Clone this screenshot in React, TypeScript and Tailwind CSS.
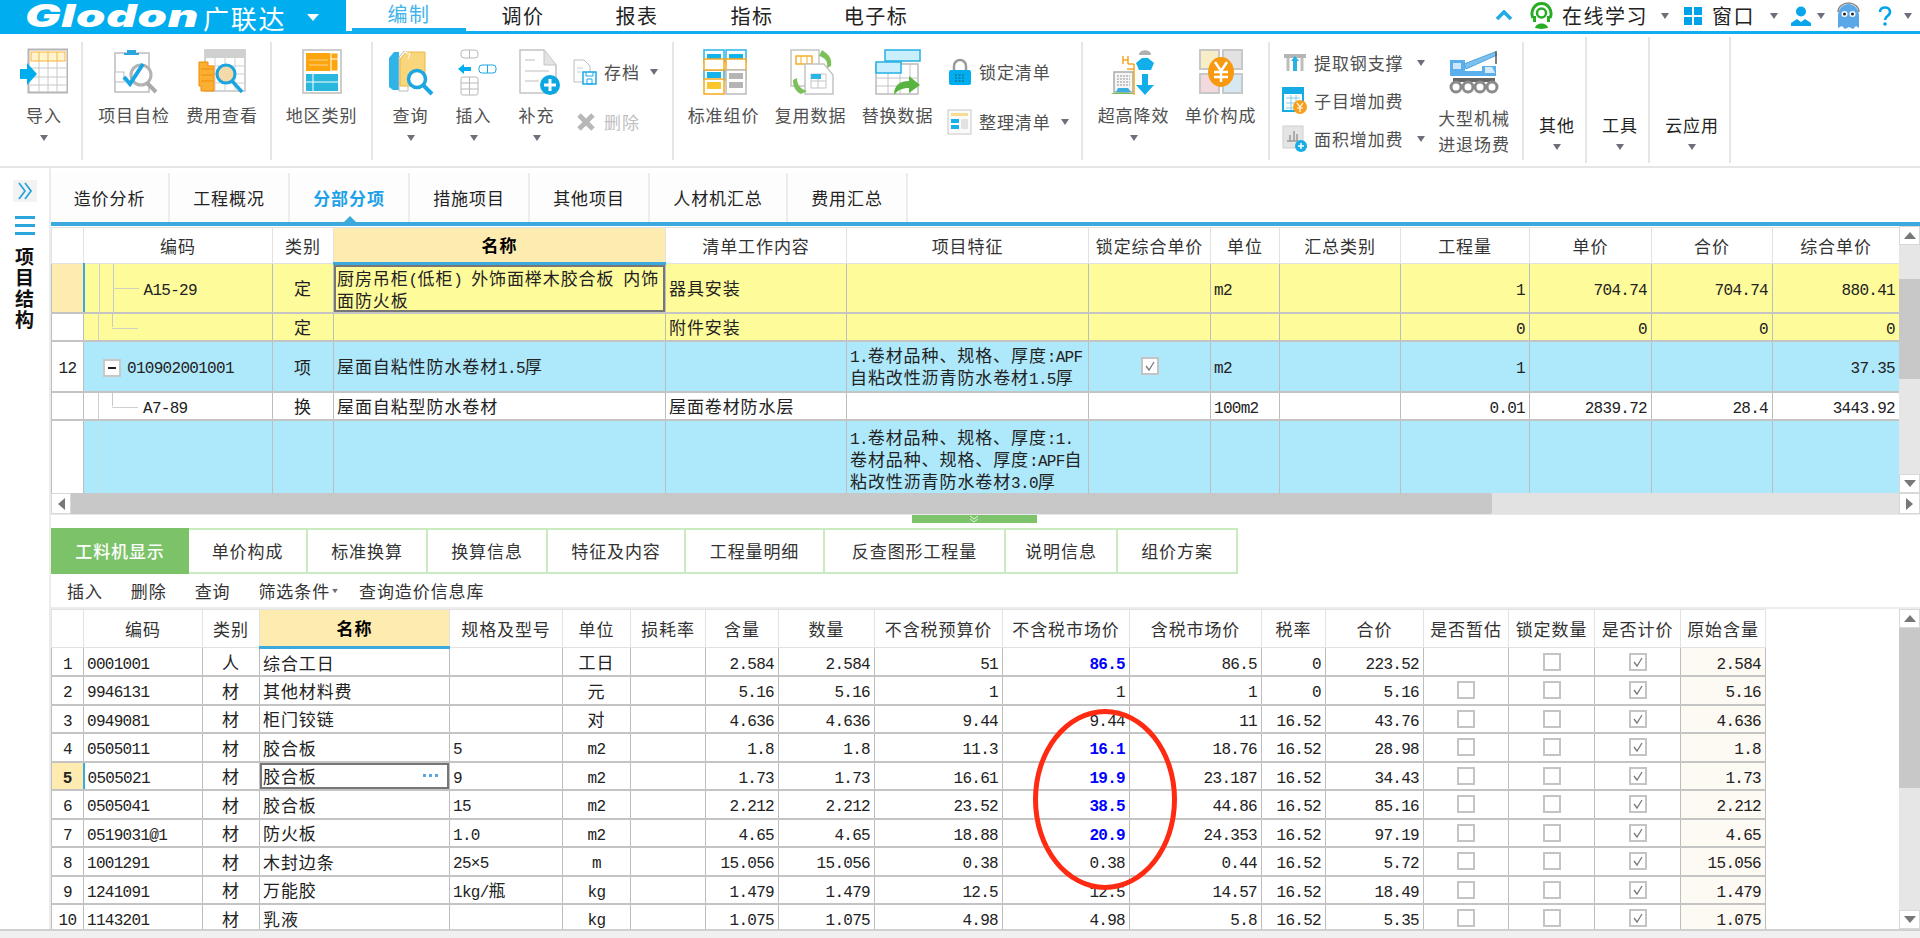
import type { ReactNode } from "react"

// digits and latin are half width in the original grid, so they get their own font run
function T({ s }: { s: string }) {
  const parts = s.split(/([\x20-\x7e×]+)/)
  return (
    <>
      {parts.map((p, i) =>
        i % 2 === 1 ? (
          <span key={i} className="font-['Liberation_Mono',monospace] text-[16px] leading-none tracking-[-0.7px] whitespace-pre">
            {p}
          </span>
        ) : (
          p
        ),
      )}
    </>
  )
}

function Caret({ className = "" }: { className?: string }) {
  return (
    <svg width="10" height="6" viewBox="0 0 10 6" className={`shrink-0 ${className}`}>
      <path d="M1 0h8L5 6z" fill="#6f6f7a" />
    </svg>
  )
}

function Box({ children, w = 48, h = 48 }: { children: ReactNode; w?: number; h?: number }) {
  return (
    <svg width={w} height={h} viewBox={`0 0 ${w} ${h}`} className="shrink-0" fill="none">
      {children}
    </svg>
  )
}

const IconImport = () => (
  <Box>
    <rect x="8.5" y="1.5" width="39" height="43" fill="#fff" stroke="#b5b5b5" strokeWidth="2" />
    <path d="M10 20h36M10 29h36M10 37h36M19 4v40M28 4v40M37 4v40" stroke="#c8c8c8" />
    <rect x="11" y="4" width="34" height="9" fill="#fff4cf" stroke="#f7b53a" />
    <path d="M19 4v9M28 4v9M37 4v9" stroke="#f7b53a" />
    <path d="M0 21h7v-6l10 11-10 11v-6H0z" fill="#00aeef" />
  </Box>
)
const IconCheckup = () => (
  <Box>
    <rect x="5" y="5" width="34" height="39" fill="#fff" stroke="#bdbdbd" strokeWidth="1.5" />
    <path d="M17 5V2h9v3h3v2H14V5z" fill="#2ba7e0" />
    <rect x="5" y="24" width="9" height="10" fill="#fff" stroke="#bdbdbd" />
    <circle cx="31" cy="27" r="10" fill="#fff" stroke="#b3b3b3" strokeWidth="3" />
    <path d="M14 29l6 7 13-20" stroke="#17a5e3" strokeWidth="4" />
    <path d="M37 35l9 9" stroke="#aaa" strokeWidth="4" />
  </Box>
)
const IconCost = () => (
  <Box>
    <rect x="7" y="2" width="40" height="41" fill="#fff" stroke="#c4c4c4" strokeWidth="1.5" />
    <rect x="7" y="2" width="40" height="8" fill="#d0d0d0" />
    <path d="M7 18h40M7 26h40M7 35h40M17 10v33M27 10v33M37 10v33" stroke="#cfcfcf" />
    <path d="M1 14h9v4h6v25H3v-5H1z" fill="#fbb034" stroke="#f08c00" />
    <path d="M3 21h12M3 27h12M3 33h12" stroke="#f08c00" />
    <circle cx="28" cy="26" r="9" fill="#f6d9a8" stroke="#1aa5df" strokeWidth="3" />
    <path d="M34 33l10 11" stroke="#1aa5df" strokeWidth="3.5" />
  </Box>
)
const IconRegion = () => (
  <Box>
    <rect x="5" y="2" width="38" height="43" fill="#fff" stroke="#bdbdbd" strokeWidth="1.5" />
    <rect x="8" y="5" width="32" height="18" fill="#fda50f" />
    <path d="M33 5h7v18h-7zM33 11h7" stroke="#fff" />
    <path d="M11 12h19M11 17h19" stroke="#ffd38a" />
    <rect x="8" y="26" width="32" height="17" fill="#2ab7dd" />
    <path d="M15 26v17M8 34h32" stroke="#fff" />
  </Box>
)
const IconQuery = () => (
  <Box>
    <path d="M2 10l5-6h5v38H6l-4-3z" fill="#2eb4e6" />
    <path d="M12 9l5-6 4 3v37h-9z" fill="#fff" stroke="#bbb" />
    <path d="M13 11l6-7h19v34H13z" fill="#f9d67b" stroke="#eab648" />
    <path d="M17 4l6 2-2 5" stroke="#fff" />
    <circle cx="30" cy="31" r="8.5" fill="#fff" stroke="#1ba8e2" strokeWidth="3.5" />
    <path d="M36 37l9 9" stroke="#1ba8e2" strokeWidth="4" />
  </Box>
)
const IconInsert = () => (
  <Box>
    <rect x="11" y="2" width="17" height="8" rx="3" fill="#fff" stroke="#b8b8b8" />
    <path d="M19.5 2v8" stroke="#b8b8b8" />
    <path d="M6 21l6-5v3h7v4h-7v3z" transform="translate(2 0)" fill="#00aeef" />
    <rect x="29" y="17" width="17" height="8" rx="3" fill="#fff" stroke="#1aa9e5" />
    <path d="M37.5 17v8" stroke="#1aa9e5" />
    <rect x="11" y="29" width="17" height="18" rx="2" fill="#fff" stroke="#b8b8b8" />
    <path d="M19.5 29v18M11 35h17M11 41h17" stroke="#b8b8b8" />
  </Box>
)
const IconAdd = () => (
  <Box>
    <path d="M7 2h24l12 15v28H7z" fill="#fff" stroke="#c4c4c4" strokeWidth="1.5" />
    <path d="M31 2v15h12" fill="#e3e3e3" stroke="#c4c4c4" />
    <path d="M12 12h10M12 23h24M12 33h14" stroke="#dedede" strokeWidth="2" />
    <circle cx="37" cy="37" r="10" fill="#0ca6e2" />
    <path d="M37 31v12M31 37h12" stroke="#fff" strokeWidth="3" />
  </Box>
)
const IconArchive = () => (
  <Box w={26} h={26}>
    <path d="M2 1h10l6 6v16H2z" fill="#fff" stroke="#bdbdbd" />
    <path d="M5 9h6M5 13h4" stroke="#ccc" />
    <rect x="11" y="13" width="13" height="12" fill="#fff" stroke="#1aa9e5" strokeWidth="1.5" />
    <path d="M14 13v4h7v-4M15 20h5v5h-5z" stroke="#1aa9e5" />
  </Box>
)
const IconDelete = () => (
  <Box w={20} h={20}>
    <path d="M3 3l14 14M17 3L3 17" stroke="#b8b8b8" strokeWidth="5" />
  </Box>
)
const IconStd = () => (
  <Box>
    <g stroke="#28b5e8" strokeWidth="1.5" fill="#fff">
      <rect x="4" y="2" width="20" height="12" />
      <rect x="26" y="2" width="20" height="12" />
      <rect x="4" y="22" width="20" height="10" />
      <rect x="26" y="22" width="20" height="10" stroke="#f8a81f" />
    </g>
    <rect x="7" y="6" width="14" height="6" fill="#12b2ec" />
    <rect x="29" y="6" width="14" height="6" fill="#12b2ec" />
    <rect x="4" y="11" width="20" height="11" fill="#fff" stroke="#f8a81f" strokeWidth="1.5" />
    <rect x="26" y="11" width="20" height="11" fill="#fff" stroke="#f8a81f" strokeWidth="1.5" />
    <rect x="7" y="24" width="14" height="6" fill="#12b2ec" />
    <rect x="4" y="31" width="20" height="15" fill="#fff" stroke="#f8a81f" strokeWidth="1.5" />
    <rect x="7" y="34" width="14" height="7" fill="#fbc52d" />
    <rect x="26" y="22" width="20" height="24" fill="#fff" stroke="#bbb" strokeWidth="1.5" />
    <rect x="29" y="25" width="14" height="6" fill="#b5b5b5" />
    <rect x="29" y="34" width="14" height="6" fill="#b5b5b5" />
  </Box>
)
const IconReuse = () => (
  <Box>
    <rect x="4" y="2" width="28" height="36" fill="#fff" stroke="#c4c4c4" strokeWidth="1.5" />
    <rect x="9" y="8" width="16" height="8" fill="#fff" stroke="#f6ad2b" strokeWidth="1.5" />
    <path d="M14 8v8M20 8v8" stroke="#f6ad2b" />
    <path d="M18 16h19l9 11v19H18z" fill="#fff" stroke="#c4c4c4" strokeWidth="1.5" />
    <path d="M24 26h15v14H24zM24 33h15M31 26v14" stroke="#c4c4c4" />
    <rect x="24" y="26" width="10" height="5" fill="#2ab7e8" />
    <path d="M35 2l-3 6c7 2 9 6 8 12l4-2c1-6-1-10-5-13z" fill="#7dbf58" />
    <path d="M14 46l6-3c-8-2-10-8-10-13l-4 2c0 7 3 11 6 13z" fill="#7dbf58" />
  </Box>
)
const IconReplace = () => (
  <Box>
    <rect x="2" y="16" width="42" height="30" fill="#fff" stroke="#bbb" strokeWidth="1.5" />
    <path d="M2 30h42M2 38h42M14 16v30M26 16v30M36 16v30" stroke="#c4c4c4" />
    <rect x="11" y="2" width="35" height="11" fill="#c8effb" stroke="#25b0e3" strokeWidth="1.5" />
    <rect x="2" y="14" width="25" height="11" fill="#c8effb" stroke="#25b0e3" strokeWidth="1.5" />
    <path d="M35 28l11 9-11 8v-5c-7 0-11 2-15 7 0-10 6-14 15-14z" fill="#57b43e" />
  </Box>
)
const IconLock = () => (
  <Box w={26} h={28}>
    <path d="M7 13V8a6 6 0 0112 0v5" stroke="#9a9a9a" strokeWidth="2.5" />
    <rect x="2" y="12" width="22" height="15" rx="2" fill="#00aeef" />
    <path d="M8 17h10M8 20h10M8 23h10" stroke="#07627f" strokeDasharray="2 1.5" />
  </Box>
)
const IconTidy = () => (
  <Box w={26} h={26}>
    <rect x="1" y="1" width="23" height="24" fill="#fafafa" stroke="#c8c8c8" />
    <rect x="4" y="4" width="17" height="3" fill="#f6dc8f" />
    <rect x="4" y="10" width="8" height="4" fill="#19b0ea" />
    <rect x="4" y="16" width="8" height="4" fill="#19b0ea" />
    <rect x="14" y="10" width="7" height="10" fill="#e2e2e2" />
  </Box>
)
const IconUltra = () => (
  <Box>
    <rect x="4" y="24" width="19" height="20" fill="#f5f5f5" stroke="#aaa" strokeWidth="1.5" />
    <path d="M7 28h13M7 31h13M7 34h13M7 37h13" stroke="#c4c4c4" strokeWidth="2" strokeDasharray="2 1" />
    <path d="M6 44l2-4h10l3 4z" fill="#3aaee0" />
    <path d="M1 46c1-2 22-2 24 0z" fill="#74bb5a" />
    <path d="M13 8v8M18 8v8M13 12h5M18 16h6M24 16v31M17 21h7" stroke="#f6a623" strokeWidth="1.5" />
    <path d="M29 6c1-5 11-5 12 0v1H29z" fill="#b0b0b0" />
    <path d="M26 15l6-5h6l6 5-3 7H29z" fill="#11aeea" />
    <path d="M32 26h6v11h6L35 47 26 37h6z" fill="#11aeea" />
  </Box>
)
const IconPrice = () => (
  <Box>
    <rect x="3" y="2" width="19" height="19" fill="#f7eec8" stroke="#c8c8c8" strokeWidth="2" />
    <rect x="26" y="2" width="19" height="19" fill="#e2e2e2" stroke="#c8c8c8" strokeWidth="2" />
    <rect x="3" y="26" width="19" height="19" fill="#f2d9dd" stroke="#c8c8c8" strokeWidth="2" />
    <rect x="26" y="26" width="19" height="19" fill="#d6e9f3" stroke="#c8c8c8" strokeWidth="2" />
    <ellipse cx="24" cy="24" rx="13" ry="15" fill="#f8990f" />
    <path d="M18 14l6 9 6-9M24 23v11M17 24h14M17 29h14" stroke="#fff" strokeWidth="2.5" />
  </Box>
)
const IconSupport = () => (
  <Box w={26} h={24}>
    <path d="M2 3h22v4H2z" fill="#b5b5b5" />
    <path d="M6 7v13M20 7v13" stroke="#bdbdbd" strokeWidth="3" />
    <path d="M13 5l4 5h-2v10h-4V10H9z" fill="#2ab0e5" />
  </Box>
)
const IconFee = () => (
  <Box w={26} h={28}>
    <rect x="1" y="1" width="20" height="23" fill="#fff" stroke="#15ace6" strokeWidth="2" />
    <rect x="1" y="1" width="20" height="6" fill="#15ace6" />
    <path d="M4 11h14M4 16h14M4 21h14M9 8v15M14 8v15" stroke="#7ccdee" />
    <circle cx="18" cy="20" r="7" fill="#f8a01c" />
    <path d="M15 16l3 4 3-4M18 20v5M15 21h6" stroke="#fff" strokeWidth="1.2" />
  </Box>
)
const IconArea = () => (
  <Box w={26} h={28}>
    <rect x="1" y="1" width="20" height="22" fill="#e4e4e4" stroke="#cfcfcf" />
    <path d="M5 16h12M8 10v6M12 6v10M15 9v7" stroke="#9b9b9b" strokeWidth="1.5" />
    <circle cx="19" cy="21" r="6" fill="#16ace5" />
    <path d="M19 18v6M16 21h6" stroke="#fff" strokeWidth="1.5" />
  </Box>
)
const IconCrane = () => (
  <Box w={50} h={46}>
    <path d="M1 11h15v16H1z" fill="#5ab0ec" />
    <path d="M4 14h8v6H4z" fill="#cde6f9" />
    <path d="M15 15L46 3l2 3-31 14z" fill="#7cc0ee" stroke="#4da4e2" />
    <path d="M47 2v13" stroke="#555" strokeWidth="1.5" />
    <path d="M1 27h46V17H33v5H16v5z" fill="#5ab0ec" />
    <path d="M36 18h7l3 6h-10z" fill="#d7ecfb" />
    <rect x="4" y="29" width="42" height="4" fill="#666" />
    <g stroke="#8a8a8a" strokeWidth="3" fill="#fff">
      <circle cx="7" cy="38" r="5" />
      <circle cx="19" cy="38" r="5" />
      <circle cx="31" cy="38" r="5" />
      <circle cx="43" cy="38" r="5" />
    </g>
  </Box>
)
const IconHeadset = () => (
  <Box w={25} h={27}>
    <path d="M4 16a9.500 10 0 1117 0" stroke="#27ad24" strokeWidth="3" />
    <circle cx="12.500" cy="11" r="4.500" stroke="#27ad24" strokeWidth="2.500" />
    <path d="M4 14h3v6H4zM18 14h3v6h-3z" fill="#27ad24" />
    <path d="M6 26c1-6 12-6 13 0l-6.500 1z" fill="#27ad24" />
  </Box>
)
const IconWindows = () => (
  <Box w={18} h={18}>
    <path d="M0 0h8v8H0zM10 0h8v8h-8zM0 10h8v8H0zM10 10h8v8h-8z" fill="#00a0ea" />
  </Box>
)
const IconUser = () => (
  <Box w={20} h={20}>
    <circle cx="10" cy="5.5" r="5" fill="#0aa5ea" />
    <path d="M0 20v-3l6-4 4 3 4-3 6 4v3z" fill="#0aa5ea" />
  </Box>
)
const IconAvatar = () => (
  <Box w={25} h={28}>
    <path d="M2 14a10.500 12 0 0121 0v12l-3-2-3 3-4-2-4 2-3-3-4 2z" fill="#5ba8e8" />
    <path d="M2 10a10.500 9 0 0121 0" stroke="#8c8c8c" strokeWidth="1.5" />
    <circle cx="8.500" cy="12" r="3" fill="#fff" />
    <circle cx="16.500" cy="12" r="3" fill="#fff" />
    <circle cx="8.500" cy="12" r="1.500" fill="#222" />
    <circle cx="16.500" cy="12" r="1.500" fill="#222" />
  </Box>
)
const IconHelp = () => (
  <Box w={14} h={20}>
    <path d="M2 6c0-6 10-6 10 0 0 4-5 4-5 8" stroke="#00a4ec" strokeWidth="2.6" />
    <circle cx="7" cy="18" r="1.800" fill="#00a4ec" />
  </Box>
)

function BigBtn({ icon, label, w, caret = false }: { icon: ReactNode; label: ReactNode; w: string; caret?: boolean }) {
  return (
    <div className={`flex flex-col items-center pt-[6px] ${w}`}>
      <div className="h-[48px] flex items-center justify-center">{icon}</div>
      <div className="mt-[8px] leading-[22px] whitespace-nowrap text-[#505050] text-center">{label}</div>
      {caret && <Caret className="mt-[9px]" />}
    </div>
  )
}

function MenuBtn({ label, w }: { label: string; w: string }) {
  return (
    <div className={`flex flex-col items-center h-[126px] pt-[77px] pl-[5px] border-r-2 border-[#e6e6e6] text-[#222] ${w}`}>
      <div className="leading-[22px] whitespace-nowrap">{label}</div>
      <Caret className="mt-[8px]" />
    </div>
  )
}

function Ribbon() {
  const group = "flex border-r-2 border-[#e6e6e6] h-[118px] shrink-0"
  return (
    <div className="flex h-[134px] py-[8px] border-b-2 border-[#e6e6e6] shrink-0">
      <div className={`${group} w-[83px] pl-[7px]`}>
        <BigBtn w="w-[74px]" icon={<IconImport />} label="导入" caret />
      </div>
      <div className={`${group} w-[189px] pl-[7px]`}>
        <BigBtn w="w-[88px]" icon={<IconCheckup />} label="项目自检" />
        <BigBtn w="w-[88px]" icon={<IconCost />} label="费用查看" />
      </div>
      <div className={`${group} w-[101px] justify-center`}>
        <BigBtn w="w-[88px]" icon={<IconRegion />} label="地区类别" />
      </div>
      <div className={`${group} w-[301px] pl-[6px]`}>
        <BigBtn w="w-[63px]" icon={<IconQuery />} label="查询" caret />
        <BigBtn w="w-[63px]" icon={<IconInsert />} label="插入" caret />
        <BigBtn w="w-[63px]" icon={<IconAdd />} label="补充" caret />
        <div className="flex flex-col pt-[17px] gap-[24px] pl-[4px]">
          <div className="flex items-center h-[26px] text-[#505050]">
            <IconArchive />
            <span className="ml-[6px]">存档</span>
            <Caret className="ml-[9px]" />
          </div>
          <div className="flex items-center h-[26px] text-[#c0c0c0]">
            <span className="ml-[4px]"><IconDelete /></span>
            <span className="ml-[8px]">删除</span>
          </div>
        </div>
      </div>
      <div className={`${group} w-[409px] pl-[6px]`}>
        <BigBtn w="w-[87px]" icon={<IconStd />} label="标准组价" />
        <BigBtn w="w-[87px]" icon={<IconReuse />} label="复用数据" />
        <BigBtn w="w-[87px]" icon={<IconReplace />} label="替换数据" />
        <div className="flex flex-col pt-[17px] gap-[24px] pl-[6px]">
          <div className="flex items-center h-[26px] text-[#505050]">
            <IconLock />
            <span className="ml-[6px]">锁定清单</span>
          </div>
          <div className="flex items-center h-[26px] text-[#505050]">
            <IconTidy />
            <span className="ml-[6px]">整理清单</span>
            <Caret className="ml-[9px]" />
          </div>
        </div>
      </div>
      <div className={`${group} w-[187px] pl-[7px]`}>
        <BigBtn w="w-[87px]" icon={<IconUltra />} label="超高降效" caret />
        <BigBtn w="w-[87px]" icon={<IconPrice />} label="单价构成" />
      </div>
      <div className={`${group} w-[254px] pl-[9px]`}>
        <div className="flex flex-col w-[151px] pt-[8px] gap-[12px] text-[#505050]">
          <div className="flex items-center h-[26px] pl-[3px]">
            <IconSupport />
            <span className="ml-[6px]">提取钢支撑</span>
            <Caret className="ml-[12px]" />
          </div>
          <div className="flex items-center h-[26px] pl-[3px]">
            <IconFee />
            <span className="ml-[6px]">子目增加费</span>
          </div>
          <div className="flex items-center h-[26px] pl-[3px]">
            <IconArea />
            <span className="ml-[6px]">面积增加费</span>
            <Caret className="ml-[12px]" />
          </div>
        </div>
        <div className="flex flex-col items-center w-[88px] pt-[6px]">
          <div className="h-[48px] flex items-center"><IconCrane /></div>
          <div className="mt-[9px] leading-[26px] text-[#505050] text-center whitespace-nowrap">
            大型机械<br />进退场费
          </div>
        </div>
      </div>
      <div className="flex -mt-[5px]">
        <MenuBtn label="其他" w="w-[63px]" />
        <MenuBtn label="工具" w="w-[63px]" />
        <MenuBtn label="云应用" w="w-[81px]" />
      </div>
    </div>
  )
}

function TopBar() {
  return (
    <div className="flex h-[34px] shrink-0 border-b-[3px] border-[#10aeef] relative">
      <div className="w-[346px] h-[34px] bg-[#00aeef] flex items-center pl-[25px] text-white shrink-0">
        <span className="w-[178px] leading-[31px]">
          <span className="inline-block origin-left scale-x-[1.52] font-['Inter',sans-serif] italic font-black text-[31px] tracking-[0.5px]">Glodon</span>
        </span>
        <span className="text-[26px] tracking-[1.7px] leading-[31px]">广联达</span>
        <svg width="12" height="7" viewBox="0 0 12 7" className="ml-[21px]"><path d="M0 0h12L6 7z" fill="#fff" /></svg>
      </div>
      <nav className="flex ml-[6px] text-[20px] tracking-[1.5px] text-[#222]">
        <div className="w-[114px] h-[31px] flex items-center justify-center text-[#3fb5ea] border-b-[3px] border-[#10aeef] bg-white">编制</div>
        <div className="w-[114px] flex items-center justify-center">调价</div>
        <div className="w-[114px] flex items-center justify-center">报表</div>
        <div className="w-[116px] flex items-center justify-center">指标</div>
        <div className="w-[132px] flex items-center justify-center">电子标</div>
      </nav>
      <div className="ml-auto flex items-center pr-[7px] text-[20px] tracking-[1.5px] text-[#222]">
        <svg width="18" height="11" viewBox="0 0 18 11"><path d="M2 9l7-7 7 7" stroke="#1cabe8" strokeWidth="3.500" fill="none" /></svg>
        <span className="ml-[16px]"><IconHeadset /></span>
        <span className="ml-[8px]">在线学习</span>
        <Caret className="ml-[12px]" />
        <span className="ml-[14px]"><IconWindows /></span>
        <span className="ml-[10px]">窗口</span>
        <Caret className="ml-[14px]" />
        <span className="ml-[12px]"><IconUser /></span>
        <Caret className="ml-[5px]" />
        <span className="ml-[10px]"><IconAvatar /></span>
        <span className="ml-[17px]"><IconHelp /></span>
        <Caret className="ml-[11px]" />
      </div>
    </div>
  )
}

function Sidebar() {
  return (
    <aside className="w-[51px] shrink-0 border-r-2 border-[#ececec] flex flex-col items-center pt-[12px]">
      <div className="w-[24px] h-[22px] bg-[#f3f3f3] flex items-center justify-center">
        <svg width="18" height="18" viewBox="0 0 18 18" fill="none">
          <path d="M3 1l6 8-6 8M9 1l6 8-6 8" stroke="#2ba6dc" strokeWidth="1.800" />
        </svg>
      </div>
      <div className="mt-[14px] flex flex-col gap-[5px]">
        <div className="w-[20px] h-[3px] bg-[#2ba6dc]" />
        <div className="w-[20px] h-[3px] bg-[#2ba6dc]" />
        <div className="w-[20px] h-[3px] bg-[#2ba6dc]" />
      </div>
      <div className="mt-[10px] w-[20px] text-[19px] font-bold leading-[21px] tracking-normal text-[#111] text-center">
        项目结构
      </div>
    </aside>
  )
}

function SubTabs() {
  const tabs = [
    ["造价分析", "w-[119px]"],
    ["工程概况", "w-[120px]"],
    ["分部分项", "w-[120px]"],
    ["措施项目", "w-[120px]"],
    ["其他项目", "w-[120px]"],
    ["人材机汇总", "w-[138px]"],
    ["费用汇总", "w-[120px]"],
  ]
  return (
    <div className="h-[58px] shrink-0 flex border-b-[4px] border-[#3ba9dc] relative">
      <svg width="8" height="20" viewBox="0 0 8 20" className="absolute left-0 top-[12px]" fill="none">
        <path d="M0 0l7 10-7 10" stroke="#dcdcdc" />
      </svg>
      {tabs.map(([label, w]) => (
        <div
          key={label}
          className={`${w} mt-[5px] flex items-center justify-center border-r-2 border-[#ececec] bg-[#fdfdfd] relative ${
            label === "分部分项" ? "text-[#1da1e8] font-bold" : "text-[#222]"
          }`}
        >
          {label}
          {label === "分部分项" && (
            <svg width="12" height="6" viewBox="0 0 12 6" className="absolute bottom-0 left-[54px]">
              <path d="M0 6L6 0l6 6z" fill="#3ba9dc" />
            </svg>
          )}
        </div>
      ))}
    </div>
  )
}

function VScroll({ h, thumb, spacer }: { h: string; thumb: string; spacer: string }) {
  return (
    <div className={`w-[21px] shrink-0 flex flex-col bg-[#e6e6e6] ${h}`}>
      <div className="h-[19px] bg-white border border-[#d8d8d8] flex items-center justify-center shrink-0">
        <svg width="12" height="7" viewBox="0 0 12 7"><path d="M0 7L6 0l6 7z" fill="#777" /></svg>
      </div>
      <div className={`shrink-0 ${spacer}`} />
      <div className={`bg-[#c8c8c8] shrink-0 ${thumb}`} />
      <div className="flex-1" />
      <div className="h-[19px] bg-white border border-[#d8d8d8] flex items-center justify-center shrink-0">
        <svg width="12" height="7" viewBox="0 0 12 7"><path d="M0 0h12L6 7z" fill="#777" /></svg>
      </div>
    </div>
  )
}

function CheckMark({ on }: { on: boolean }) {
  return (
    <div className="mx-auto w-[18px] h-[18px] border-2 border-[#c4c4c4] bg-white flex items-center justify-center">
      {on && (
        <svg width="12" height="12" viewBox="0 0 12 12" fill="none">
          <path d="M2 6l3 4 5-8" stroke="#7a7a7a" strokeWidth="1.300" />
        </svg>
      )}
    </div>
  )
}

const hd = "border border-[#e2e2e2] p-0 font-normal text-center text-[#333] bg-white"
const hdActive = "border border-[#e2e2e2] border-b-[3px] border-b-[#3ba9dc] p-0 font-bold text-center text-black bg-[#feebb0]"
const td = "border border-[#bdbdbd] border-b-2 border-b-[#c4c4c4] p-0 pl-[3px] leading-[21px] text-[#222] overflow-hidden"
const tdC = "border border-[#bdbdbd] border-b-2 border-b-[#c4c4c4] p-0 text-center leading-[21px] text-[#222]"
const tdR = "border border-[#bdbdbd] border-b-2 border-b-[#c4c4c4] p-0 pr-[4px] text-right leading-[21px] text-[#222]"

function TreeV({ top, bottom }: { top: string; bottom: string }) {
  return <span className={`absolute left-[28px] w-[1px] bg-[#c8c8c8] ${top} ${bottom}`} />
}

function UpperGrid() {
  const cols = [
    "w-[32px]", "w-[189px]", "w-[61px]", "w-[332px]", "w-[181px]", "w-[242px]", "w-[122px]",
    "w-[69px]", "w-[121px]", "w-[129px]", "w-[122px]", "w-[121px]", "w-[127px]",
  ]
  const heads = ["", "编码", "类别", "名称", "清单工作内容", "项目特征", "锁定综合单价", "单位", "汇总类别", "工程量", "单价", "合价", "综合单价"]
  return (
    <div className="w-[1848px] h-[267px] overflow-hidden shrink-0 pt-px">
      <table className="table-fixed border-collapse w-[1848px]">
        <colgroup>
          {cols.map((c, i) => <col key={i} className={c} />)}
        </colgroup>
        <thead>
          <tr className="h-[36px]">
            {heads.map((h, i) => (
              <th key={i} className={`whitespace-nowrap ${h === "名称" ? hdActive : hd}`}>{h}</th>
            ))}
          </tr>
        </thead>
        <tbody>
          <tr className="h-[49px] bg-[#fefb9b]">
            <td className={`${tdC} bg-[#feebb0] border-r-2 border-r-[#3ba9dc]`} />
            <td className={`${td} relative`}>
              <span className="absolute left-[14px] top-0 bottom-0 w-[1px] bg-[#cfcfcf]" />
              <TreeV top="top-0" bottom="bottom-0" />
              <span className="absolute left-[28px] top-[24px] w-[26px] h-[1px] bg-[#d2d2c0]" />
              <span className="pl-[56px]"><T s="A15-29" /></span>
            </td>
            <td className={tdC}>定</td>
            <td className={`${td} shadow-[inset_0_0_0_2px_#777] whitespace-nowrap`}>
              <T s="厨房吊柜(低柜) 外饰面榉木胶合板 内饰" /><br />面防火板
            </td>
            <td className={td}>器具安装</td>
            <td className={td} />
            <td className={td} />
            <td className={td}><T s="m2" /></td>
            <td className={td} />
            <td className={tdR}><T s="1" /></td>
            <td className={tdR}><T s="704.74" /></td>
            <td className={tdR}><T s="704.74" /></td>
            <td className={tdR}><T s="880.41" /></td>
          </tr>
          <tr className="h-[28px] bg-[#fefb9b]">
            <td className={`${tdC} bg-white`} />
            <td className={`${td} relative`}>
              <span className="absolute left-[14px] top-0 bottom-0 w-[1px] bg-[#cfcfcf]" />
              <TreeV top="top-0" bottom="bottom-[13px]" />
              <span className="absolute left-[28px] top-[14px] w-[26px] h-[1px] bg-[#d2d2c0]" />
            </td>
            <td className={tdC}>定</td>
            <td className={td} />
            <td className={td}>附件安装</td>
            <td className={td} />
            <td className={td} />
            <td className={td} />
            <td className={td} />
            <td className={tdR}><T s="0" /></td>
            <td className={tdR}><T s="0" /></td>
            <td className={tdR}><T s="0" /></td>
            <td className={tdR}><T s="0" /></td>
          </tr>
          <tr className="h-[51px] bg-[#aee8fb]">
            <td className={`${tdC} bg-white`}><T s="12" /></td>
            <td className={`${td} relative`}>
              <span className="absolute left-[19px] top-[17px] w-[18px] h-[18px] border-2 border-[#c8c8c8] bg-white flex items-center justify-center">
                <span className="w-[8px] h-[2px] bg-[#222]" />
              </span>
              <span className="pl-[40px]"><T s="010902001001" /></span>
            </td>
            <td className={tdC}>项</td>
            <td className={td}><T s="屋面自粘性防水卷材1.5厚" /></td>
            <td className={td} />
            <td className={`${td} whitespace-nowrap`}>
              <T s="1.卷材品种、规格、厚度:APF" /><br /><T s="自粘改性沥青防水卷材1.5厚" />
            </td>
            <td className={tdC}><CheckMark on /></td>
            <td className={td}><T s="m2" /></td>
            <td className={td} />
            <td className={tdR}><T s="1" /></td>
            <td className={tdR} />
            <td className={tdR} />
            <td className={tdR}><T s="37.35" /></td>
          </tr>
          <tr className="h-[28px] bg-white">
            <td className={tdC} />
            <td className={`${td} relative`}>
              <span className="absolute left-[14px] top-0 bottom-0 w-[1px] bg-[#cfcfcf]" />
              <TreeV top="top-0" bottom="bottom-[13px]" />
              <span className="absolute left-[28px] top-[14px] w-[26px] h-[1px] bg-[#cfcfcf]" />
              <span className="pl-[56px]"><T s="A7-89" /></span>
            </td>
            <td className={tdC}>换</td>
            <td className={td}>屋面自粘型防水卷材</td>
            <td className={td}>屋面卷材防水层</td>
            <td className={td} />
            <td className={td} />
            <td className={td}><T s="100m2" /></td>
            <td className={td} />
            <td className={tdR}><T s="0.01" /></td>
            <td className={tdR}><T s="2839.72" /></td>
            <td className={tdR}><T s="28.4" /></td>
            <td className={tdR}><T s="3443.92" /></td>
          </tr>
          <tr className="bg-[#aee8fb]">
            <td className={`${tdC} bg-white`}><div className="h-[74px]" /></td>
            <td className={`${td} relative`}>
              <span className="absolute left-[14px] top-0 bottom-0 w-[1px] bg-[#c4dfe8]" />
            </td>
            <td className={tdC} />
            <td className={td} />
            <td className={td} />
            <td className={`${td} align-top whitespace-nowrap`}>
              <div className="h-[74px] overflow-hidden pt-[5px]">
                <T s="1.卷材品种、规格、厚度:1." /><br />
                <T s="卷材品种、规格、厚度:APF自" /><br />
                <T s="粘改性沥青防水卷材3.0厚" /><br />
                <T s="2.工作内容:1.刷基层处理剂" />
              </div>
            </td>
            <td className={td} />
            <td className={td} />
            <td className={td} />
            <td className={td} />
            <td className={td} />
            <td className={td} />
            <td className={td} />
          </tr>
        </tbody>
      </table>
    </div>
  )
}

function HScroll() {
  return (
    <div className="h-[22px] shrink-0 flex bg-[#e2e2e2] border-b border-[#e8e8e8]">
      <div className="w-[20px] bg-white border border-[#d8d8d8] flex items-center justify-center">
        <svg width="7" height="12" viewBox="0 0 7 12"><path d="M7 0L0 6l7 6z" fill="#777" /></svg>
      </div>
      <div className="w-[1421px] bg-[#c8c8c8] rounded-r-[2px]" />
      <div className="flex-1" />
      <div className="w-[21px] bg-white border border-[#d8d8d8] flex items-center justify-center">
        <svg width="7" height="12" viewBox="0 0 7 12"><path d="M0 0l7 6-7 6z" fill="#777" /></svg>
      </div>
    </div>
  )
}

function Splitter() {
  return (
    <div className="h-[13px] shrink-0 flex justify-center pr-[23px]">
      <div className="w-[125px] h-[8px] bg-[#7dc36b] flex items-center justify-center">
        <svg width="12" height="8" viewBox="0 0 12 8" fill="none"><path d="M2 1l4 3 4-3M2 4l4 3 4-3" stroke="#e3f3de" /></svg>
      </div>
    </div>
  )
}

function BottomTabs() {
  const tabs = [
    ["单价构成", "w-[119px]"],
    ["标准换算", "w-[120px]"],
    ["换算信息", "w-[120px]"],
    ["特征及内容", "w-[138px]"],
    ["工程量明细", "w-[139px]"],
    ["反查图形工程量", "w-[181px]"],
    ["说明信息", "w-[112px]"],
    ["组价方案", "w-[120px]"],
  ]
  return (
    <div className="h-[46px] shrink-0 flex">
      <div className="w-[138px] bg-[#7cc268] text-white flex items-center justify-center font-medium">工料机显示</div>
      {tabs.map(([label, w]) => (
        <div key={label} className={`${w} flex items-center justify-center border-y-2 border-r-2 border-[#c9ebbf] text-[#333]`}>
          {label}
        </div>
      ))}
    </div>
  )
}

function SubToolbar() {
  return (
    <div className="h-[35px] shrink-0 flex items-center pl-[16px] gap-[28px] text-[#333] border-b-2 border-[#ececec]">
      <span>插入</span>
      <span>删除</span>
      <span>查询</span>
      <span className="flex items-center">筛选条件<Caret className="scale-75 -mr-[3px]" /></span>
      <span className="-ml-[6px]">查询造价信息库</span>
    </div>
  )
}

type Row = {
  n: string
  code: string
  kind: string
  name: string
  spec: string
  unit: string
  nums: string[]
  tax: string
  taxed: string
  rate: string
  total: string
  blue?: boolean
  noEst?: boolean
}

const rows: Row[] = [
  { n: "1", code: "0001001", kind: "人", name: "综合工日", spec: "", unit: "工日", nums: ["2.584", "2.584", "51"], tax: "86.5", taxed: "86.5", rate: "0", total: "223.52", blue: true, noEst: true },
  { n: "2", code: "9946131", kind: "材", name: "其他材料费", spec: "", unit: "元", nums: ["5.16", "5.16", "1"], tax: "1", taxed: "1", rate: "0", total: "5.16" },
  { n: "3", code: "0949081", kind: "材", name: "柜门铰链", spec: "", unit: "对", nums: ["4.636", "4.636", "9.44"], tax: "9.44", taxed: "11", rate: "16.52", total: "43.76" },
  { n: "4", code: "0505011", kind: "材", name: "胶合板", spec: "5", unit: "m2", nums: ["1.8", "1.8", "11.3"], tax: "16.1", taxed: "18.76", rate: "16.52", total: "28.98", blue: true },
  { n: "5", code: "0505021", kind: "材", name: "胶合板", spec: "9", unit: "m2", nums: ["1.73", "1.73", "16.61"], tax: "19.9", taxed: "23.187", rate: "16.52", total: "34.43", blue: true },
  { n: "6", code: "0505041", kind: "材", name: "胶合板", spec: "15", unit: "m2", nums: ["2.212", "2.212", "23.52"], tax: "38.5", taxed: "44.86", rate: "16.52", total: "85.16", blue: true },
  { n: "7", code: "0519031@1", kind: "材", name: "防火板", spec: "1.0", unit: "m2", nums: ["4.65", "4.65", "18.88"], tax: "20.9", taxed: "24.353", rate: "16.52", total: "97.19", blue: true },
  { n: "8", code: "1001291", kind: "材", name: "木封边条", spec: "25×5", unit: "m", nums: ["15.056", "15.056", "0.38"], tax: "0.38", taxed: "0.44", rate: "16.52", total: "5.72" },
  { n: "9", code: "1241091", kind: "材", name: "万能胶", spec: "1kg/瓶", unit: "kg", nums: ["1.479", "1.479", "12.5"], tax: "12.5", taxed: "14.57", rate: "16.52", total: "18.49" },
  { n: "10", code: "1143201", kind: "材", name: "乳液", spec: "", unit: "kg", nums: ["1.075", "1.075", "4.98"], tax: "4.98", taxed: "5.8", rate: "16.52", total: "5.35" },
]

function LowerGrid() {
  const cols = [
    "w-[32px]", "w-[119px]", "w-[57px]", "w-[190px]", "w-[113px]", "w-[68px]", "w-[75px]", "w-[73px]", "w-[96px]",
    "w-[128px]", "w-[127px]", "w-[132px]", "w-[64px]", "w-[98px]", "w-[85px]", "w-[86px]", "w-[86px]", "w-[85px]",
  ]
  const heads = ["", "编码", "类别", "名称", "规格及型号", "单位", "损耗率", "含量", "数量", "不含税预算价", "不含税市场价", "含税市场价", "税率", "合价", "是否暂估", "锁定数量", "是否计价", "原始含量"]
  return (
    <div className="flex-1 overflow-hidden">
      <table className="table-fixed border-collapse w-[1714px]">
        <colgroup>
          {cols.map((c, i) => <col key={i} className={c} />)}
        </colgroup>
        <thead>
          <tr className="h-[38px]">
            {heads.map((h, i) => (
              <th key={i} className={`whitespace-nowrap ${h === "名称" ? hdActive : hd}`}>{h}</th>
            ))}
          </tr>
        </thead>
        <tbody>
          {rows.map((r) => {
            const active = r.n === "5"
            return (
              <tr key={r.n} className="h-[28.5px] bg-white">
                <td className={active ? `${tdC} font-bold bg-[#feebb0] border-r-2 border-r-[#3ba9dc]` : tdC}><T s={r.n} /></td>
                <td className={td}><T s={r.code} /></td>
                <td className={tdC}>{r.kind}</td>
                <td className={active ? `${td} relative shadow-[inset_0_0_0_2px_#777]` : td}>
                  {r.name}
                  {active && (
                    <span className="absolute right-[11px] top-[11px] flex gap-[3px]">
                      <i className="w-[3px] h-[3px] bg-[#5aa5e0]" />
                      <i className="w-[3px] h-[3px] bg-[#5aa5e0]" />
                      <i className="w-[3px] h-[3px] bg-[#5aa5e0]" />
                    </span>
                  )}
                </td>
                <td className={td}><T s={r.spec} /></td>
                <td className={tdC}><T s={r.unit} /></td>
                <td className={tdC} />
                {r.nums.map((v, i) => (
                  <td key={i} className={tdR}><T s={v} /></td>
                ))}
                <td className={r.blue ? `${tdR} font-bold` : tdR}>
                  <span className={r.blue ? "text-[#0000ff]" : ""}><T s={r.tax} /></span>
                </td>
                <td className={tdR}><T s={r.taxed} /></td>
                <td className={tdR}><T s={r.rate} /></td>
                <td className={tdR}><T s={r.total} /></td>
                <td className={tdC}>{!r.noEst && <CheckMark on={false} />}</td>
                <td className={tdC}><CheckMark on={false} /></td>
                <td className={tdC}><CheckMark on /></td>
                <td className={`${tdR} bg-[#fdf9f3]`}><T s={r.nums[0]} /></td>
              </tr>
            )
          })}
        </tbody>
      </table>
    </div>
  )
}

export default function App() {
  return (
    <div className="w-[1920px] h-[938px] overflow-hidden bg-white relative flex flex-col font-['Noto_Sans_CJK_SC',sans-serif] text-[17px] tracking-[0.9px]">
      <TopBar />
      <Ribbon />
      <div className="flex flex-1 min-h-0">
        <Sidebar />
        <main className="flex-1 min-w-0 flex flex-col">
          <SubTabs />
          <div className="flex shrink-0">
            <UpperGrid />
            <VScroll h="h-[267px]" spacer="h-[34px]" thumb="h-[100px]" />
          </div>
          <HScroll />
          <Splitter />
          <BottomTabs />
          <SubToolbar />
          <div className="flex flex-1 min-h-0">
            <LowerGrid />
            <VScroll h="h-[320px]" spacer="h-0" thumb="h-[160px]" />
          </div>
        </main>
      </div>
      <div className="h-[9px] shrink-0 bg-[#f0f0f0] border-t-2 border-[#cfcfcf]" />
      {/* 红色标注圈 */}
      <div className="absolute left-[1033px] top-[709px] w-[144px] h-[181px] rounded-[50%] border-[5px] border-[#ff2a12] pointer-events-none" />
    </div>
  )
}
